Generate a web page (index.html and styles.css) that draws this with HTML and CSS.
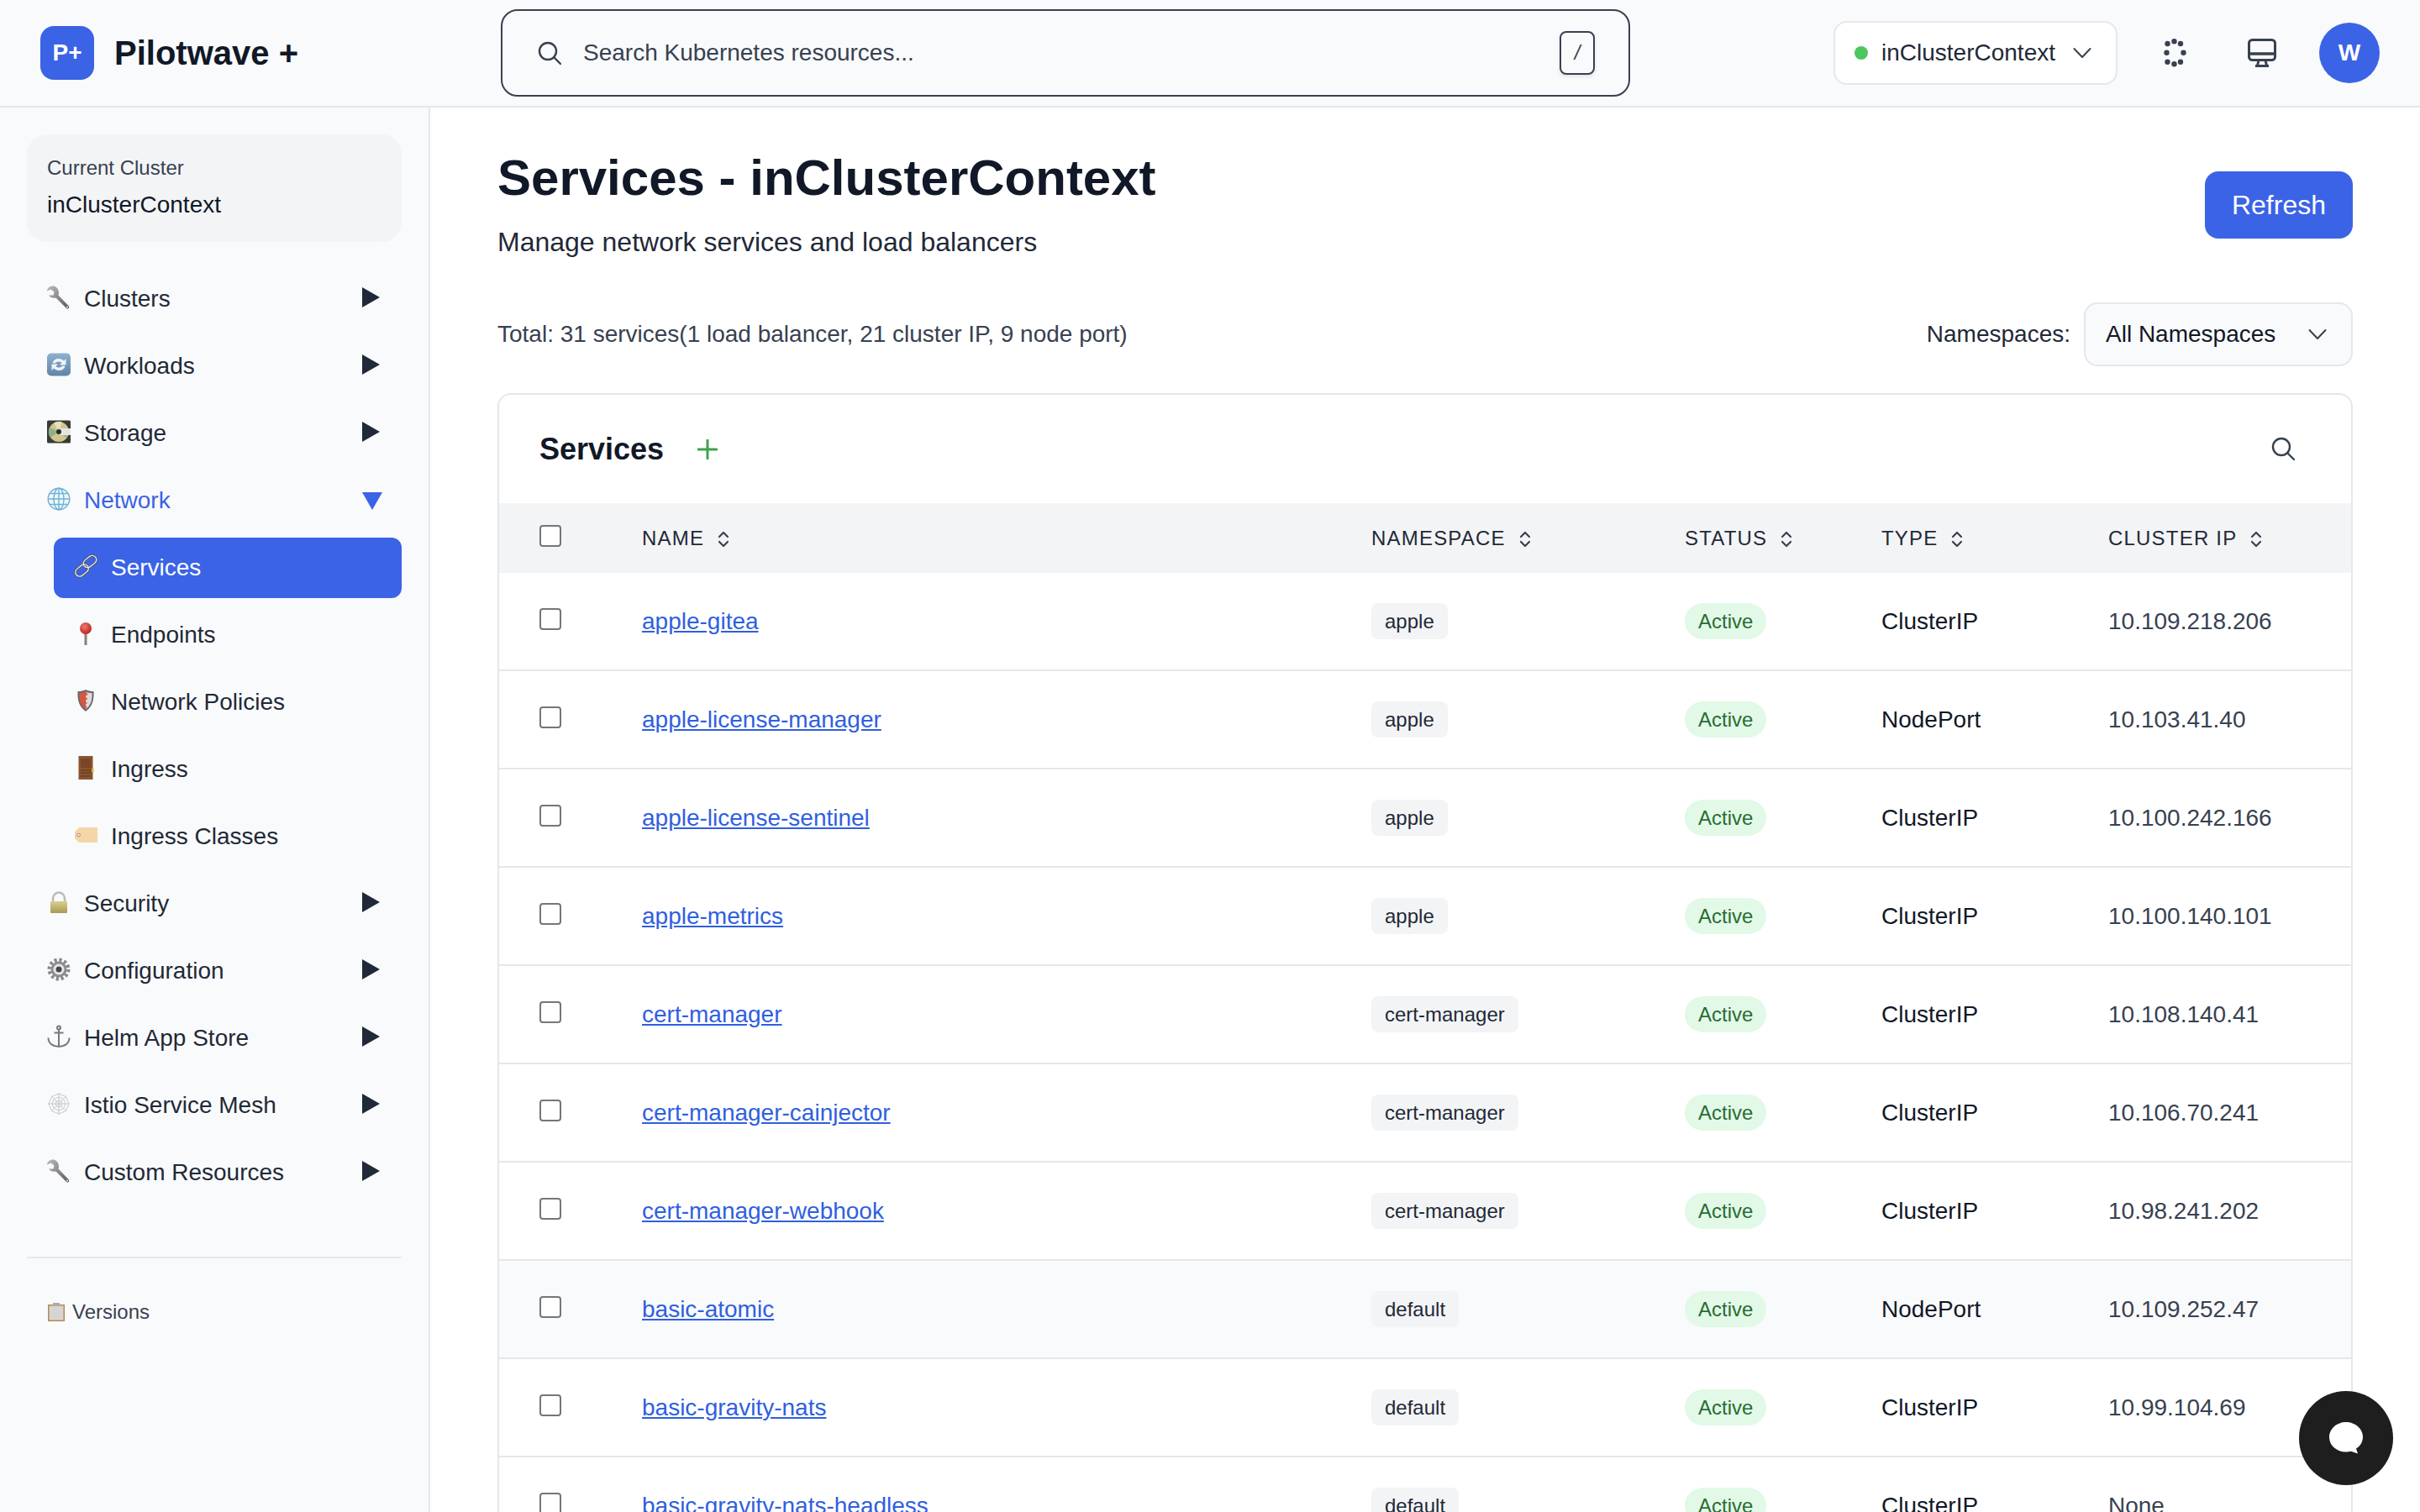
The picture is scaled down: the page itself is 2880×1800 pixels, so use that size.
FILE: index.html
```html
<!DOCTYPE html>
<html lang="en">
<head>
    <meta charset="UTF-8">
    <title>Services - Pilotwave +</title>
    <link rel="stylesheet" href="styles.css">
</head>
<body>

    <!-- Shared icons -->
    <svg class="icon-defs" width="0" height="0">
        <defs>
            <linearGradient id="steel" x1="0" y1="0" x2="1" y2="1">
                <stop offset="0" stop-color="#b9b9bb"/>
                <stop offset="1" stop-color="#5f5a5a"/>
            </linearGradient>
            <linearGradient id="brass" x1="0" y1="0" x2="0" y2="1">
                <stop offset="0" stop-color="#d9cf8e"/>
                <stop offset="1" stop-color="#a89a55"/>
            </linearGradient>
            <linearGradient id="tile" x1="0" y1="0" x2="0" y2="1">
                <stop offset="0" stop-color="#8fb0cf"/>
                <stop offset="1" stop-color="#5f84a8"/>
            </linearGradient>
            <radialGradient id="pinhead" cx="0.4" cy="0.35" r="0.7">
                <stop offset="0" stop-color="#ee7a70"/>
                <stop offset="1" stop-color="#b81f1c"/>
            </radialGradient>
        </defs>
        <symbol id="wrench" viewBox="0 0 28 28">
            <path d="M8 0.500C3.500 0 .5 2.500 0 6.500l4.500-2L8.500 7.500 7.500 11.500 2 11.500c1.500 2.500 5 4 8.500 3L23 27c1.500 1.500 4-.5 3-2.500L13.500 11.500C15 6.500 12.500 1.500 8 0.500z" fill="url(#steel)"/>
            <circle cx="24" cy="25.500" r="1" fill="#eee"/>
        </symbol>
        <symbol id="arrows" viewBox="0 0 28 28">
            <rect width="28" height="27" y=".5" rx="5" fill="url(#tile)"/>
            <path d="M6.500 12c1-3.500 4-5 7.500-5 2.500 0 4.500 1 6 2.500L22.500 7v7.500H15l2.500-2.500c-1-1-2.200-1.500-3.500-1.500-2 0-3.500.7-4.200 2z" fill="#eef3f8"/>
            <path d="M21.500 16c-1 3.500-4 5-7.500 5-2.500 0-4.500-1-6-2.500L5.500 21v-7.500H13l-2.500 2.500c1 1 2.200 1.500 3.500 1.500 2 0 3.500-.7 4.200-2z" fill="#eef3f8"/>
        </symbol>
        <symbol id="disc" viewBox="0 0 28 28">
            <rect width="28" height="27" y=".5" rx="1.500" fill="#3b3936"/>
            <circle cx="14" cy="14" r="12" fill="#cfc68f"/>
            <path d="M14 14 3 9a12 12 0 0 0 1 12zM14 14l9 7a12 12 0 0 0 2-5z" fill="#8fb08a"/>
            <path d="M14 14 8 3.500a12 12 0 0 1 10-1z" fill="#e6dfc0"/>
            <rect x="15" y="10" width="13" height="8" fill="#e4e4e2"/>
            <circle cx="14" cy="14" r="3" fill="#2c2a28"/>
        </symbol>
        <symbol id="globe" viewBox="0 0 28 28">
            <g fill="#eef6fa" stroke="#6fb2d6" stroke-width="1.400">
                <circle cx="14" cy="14" r="12.800"/>
                <ellipse cx="14" cy="14" rx="6" ry="12.800"/>
            </g>
            <path d="M14 1.200v25.600M1.200 14h25.600M3 7.500h22M3 20.500h22" stroke="#6fb2d6" stroke-width="1.400" fill="none"/>
        </symbol>
        <symbol id="link" viewBox="0 0 28 28">
            <g fill="none" stroke="#4b4b4f" stroke-width="2.800">
                <rect x="-8.500" y="-5" width="17" height="10" rx="5" transform="translate(19 8.500) rotate(-38)"/>
                <rect x="-8.500" y="-5" width="17" height="10" rx="5" transform="translate(9.500 19) rotate(-38)"/>
            </g>
            <g fill="none" stroke="#e4e4e6" stroke-width="1.400">
                <rect x="-8.500" y="-5" width="17" height="10" rx="5" transform="translate(19 8.500) rotate(-38)"/>
                <rect x="-8.500" y="-5" width="17" height="10" rx="5" transform="translate(9.500 19) rotate(-38)"/>
            </g>
        </symbol>
        <symbol id="pin" viewBox="0 0 28 28">
            <rect x="12.500" y="10" width="3" height="18" fill="#8a8078"/>
            <circle cx="14" cy="8" r="7" fill="url(#pinhead)"/>
        </symbol>
        <symbol id="shield" viewBox="0 0 28 28">
            <path d="M14 1c3 1.500 6 2 9.500 2 .5 9-1 18-9.500 24C5.500 21 4 12 4.500 3 8 3 11 2.500 14 1z" fill="#6d6a6c"/>
            <path d="M14 3.500c2.500 1 5 1.600 7.500 1.600.3 7.500-1 14.500-7.500 19.500z" fill="#dcdcdc"/>
            <path d="M14 3.500c-2.500 1-5 1.600-7.500 1.600-.3 7.500 1 14.500 7.500 19.500l1.500-3-3-2.500 3.500-2-3.500-3 4-2-3.500-3 3.500-2-2-3.500z" fill="#d9573f"/>
        </symbol>
        <symbol id="door" viewBox="0 0 28 28">
            <rect x="5.500" width="17" height="28" fill="#8a5430"/>
            <rect x="8" y="3" width="12" height="11" fill="#7a4527"/>
            <path d="M8 17h12M8 20h12M8 24h12" stroke="#5f3419" stroke-width="1.200"/>
            <rect x="21" y="15" width="2.500" height="4" fill="#d9b23c"/>
        </symbol>
        <symbol id="tag" viewBox="0 0 28 28">
            <path d="M6 5h22v18H6L1 18v-8z" fill="#f4d6a8"/>
            <circle cx="5.500" cy="14" r="1.800" fill="#fff" stroke="#9a8468"/>
        </symbol>
        <symbol id="lock" viewBox="0 0 28 28">
            <path d="M7 14V9.500a7 7 0 0 1 14 0V14" fill="none" stroke="#b8bcc2" stroke-width="2.600"/>
            <rect x="4" y="13" width="20" height="14" rx="1" fill="url(#brass)"/>
        </symbol>
        <symbol id="gear" viewBox="0 0 28 28">
            <circle cx="14" cy="14" r="10.500" fill="none" stroke="#8a8a8c" stroke-width="6" stroke-dasharray="3 2.500"/>
            <circle cx="14" cy="14" r="9.500" fill="#8e8e91"/>
            <circle cx="14" cy="14" r="6.500" fill="#e8e8ea"/>
            <circle cx="14" cy="14" r="3.500" fill="#45454a"/>
        </symbol>
        <symbol id="anchor" viewBox="0 0 28 28">
            <g fill="none" stroke="#77797d" stroke-width="2">
                <circle cx="14" cy="3.500" r="2"/>
                <path d="M14 5.500V26M8.500 9.500h11M1.500 15.500c0 7 6 10.500 12.500 10.500s12.500-3.500 12.500-10.500"/>
            </g>
        </symbol>
        <symbol id="web" viewBox="0 0 28 28">
            <g fill="none" stroke="#c6c8cc" stroke-width="1">
                <path d="M14 1v26M1 14h26M4.800 4.800l18.400 18.400M23.200 4.800 4.800 23.200"/>
                <path d="M14 2 22.500 5.500 26 14 22.500 22.500 14 26 5.500 22.500 2 14 5.500 5.500z"/>
                <path d="M14 6 19.700 8.300 22 14 19.700 19.700 14 22 8.300 19.700 6 14 8.300 8.300z"/>
                <path d="M14 10 16.800 11.200 18 14 16.800 16.800 14 18 11.200 16.800 10 14 11.200 11.200z"/>
            </g>
        </symbol>
        <symbol id="clipboard" viewBox="0 0 22 22">
            <rect x="1" y="2" width="20" height="20" fill="#b58a52"/>
            <rect x="2.500" y="3.500" width="17" height="17" fill="#d5d5d3"/>
            <rect x="7" y="0" width="8" height="3.500" fill="#a9a9a7"/>
        </symbol>
        <symbol id="sort" viewBox="0 0 14 20">
            <path d="M2 7l5-5 5 5M2 13l5 5 5-5" fill="none" stroke="currentColor" stroke-width="2.200" stroke-linecap="round" stroke-linejoin="round"/>
        </symbol>
        <symbol id="search" viewBox="0 0 28 28">
            <circle cx="12" cy="12" r="10" fill="none" stroke="currentColor" stroke-width="2.400"/>
            <path d="M19.500 19.500 27 27" fill="none" stroke="currentColor" stroke-width="2.400" stroke-linecap="round"/>
        </symbol>
        <symbol id="chevron" viewBox="0 0 22 14">
            <path d="M1.500 2 11 12 20.500 2" fill="none" stroke="currentColor" stroke-width="2" stroke-linecap="round" stroke-linejoin="round"/>
        </symbol>
    </svg>

    <!-- Top bar -->
    <header class="topbar">
        <div class="brand">
            <span class="brand-mark">P+</span>
            <span class="brand-name">Pilotwave +</span>
        </div>
        <div class="global-search">
            <svg class="search-icon"><use href="#search"/></svg>
            <span class="search-hint">Search Kubernetes resources...</span>
            <kbd class="search-key">/</kbd>
        </div>
        <div class="topbar-right">
            <div class="context-select">
                <span class="status-dot"></span>
                <span>inClusterContext</span>
                <svg class="chevron"><use href="#chevron"/></svg>
            </div>
            <div class="topbar-button">
                <svg width="28" height="34" viewBox="0 0 28 34" fill="#374151">
                    <circle cx="13.500" cy="3.300" r="3.200"/><circle cx="5.500" cy="6" r="3.200"/><circle cx="21" cy="6" r="3.200"/>
                    <circle cx="4.500" cy="16.700" r="3.200"/><circle cx="24.500" cy="16.700" r="3.200"/>
                    <circle cx="5.500" cy="27.700" r="3.200"/><circle cx="13.500" cy="30.300" r="3.200"/><circle cx="21" cy="27.700" r="3.200"/>
                </svg>
            </div>
            <div class="topbar-button">
                <svg width="34" height="34" viewBox="0 0 34 34" fill="none" stroke="#374151" stroke-width="3">
                    <rect x="1.500" y="1.500" width="31" height="24" rx="4"/>
                    <path d="M1.500 18h31" stroke-width="3.500"/>
                    <path d="M13 26l-1.500 6M21 26l1.500 6M9 32.500h16"/>
                </svg>
            </div>
            <div class="avatar">W</div>
        </div>
    </header>

    <div class="layout">
        <!-- Sidebar -->
        <aside class="sidebar">
            <div class="cluster-card">
                <div class="cluster-label">Current Cluster</div>
                <div class="cluster-name">inClusterContext</div>
            </div>

            <nav class="nav">
                <div class="nav-item"><svg class="nav-icon"><use href="#wrench"/></svg><span>Clusters</span><span class="arrow"></span></div>
                <div class="nav-item"><svg class="nav-icon"><use href="#arrows"/></svg><span>Workloads</span><span class="arrow"></span></div>
                <div class="nav-item"><svg class="nav-icon"><use href="#disc"/></svg><span>Storage</span><span class="arrow"></span></div>
                <div class="nav-item open"><svg class="nav-icon"><use href="#globe"/></svg><span>Network</span><span class="arrow"></span></div>
                <div class="nav-item sub active"><svg class="nav-icon"><use href="#link"/></svg><span>Services</span></div>
                <div class="nav-item sub"><svg class="nav-icon"><use href="#pin"/></svg><span>Endpoints</span></div>
                <div class="nav-item sub"><svg class="nav-icon"><use href="#shield"/></svg><span>Network Policies</span></div>
                <div class="nav-item sub"><svg class="nav-icon"><use href="#door"/></svg><span>Ingress</span></div>
                <div class="nav-item sub"><svg class="nav-icon"><use href="#tag"/></svg><span>Ingress Classes</span></div>
                <div class="nav-item"><svg class="nav-icon"><use href="#lock"/></svg><span>Security</span><span class="arrow"></span></div>
                <div class="nav-item"><svg class="nav-icon"><use href="#gear"/></svg><span>Configuration</span><span class="arrow"></span></div>
                <div class="nav-item"><svg class="nav-icon"><use href="#anchor"/></svg><span>Helm App Store</span><span class="arrow"></span></div>
                <div class="nav-item"><svg class="nav-icon"><use href="#web"/></svg><span>Istio Service Mesh</span><span class="arrow"></span></div>
                <div class="nav-item"><svg class="nav-icon"><use href="#wrench"/></svg><span>Custom Resources</span><span class="arrow"></span></div>
            </nav>

            <div class="sidebar-footer">
                <svg class="versions-icon"><use href="#clipboard"/></svg>
                <span>Versions</span>
            </div>
        </aside>

        <!-- Main content -->
        <main class="main">
            <div class="page-head">
                <div>
                    <h1>Services - inClusterContext</h1>
                    <p class="page-sub">Manage network services and load balancers</p>
                </div>
                <button class="refresh-button">Refresh</button>
            </div>

            <div class="summary-row">
                <div class="summary">Total: 31 services(1 load balancer, 21 cluster IP, 9 node port)</div>
                <div class="namespace-filter">
                    <span>Namespaces:</span>
                    <div class="namespace-select">
                        <span>All Namespaces</span>
                        <svg class="chevron"><use href="#chevron"/></svg>
                    </div>
                </div>
            </div>

            <section class="card">
                <div class="card-head">
                    <h2>Services</h2>
                    <svg class="add-icon" width="24" height="24" viewBox="0 0 24 24"><path d="M12 1v22M1 12h22" stroke="#3fa34d" stroke-width="3" stroke-linecap="round"/></svg>
                    <svg class="card-search"><use href="#search"/></svg>
                </div>

                <table class="services">
                    <colgroup>
                        <col class="col-check"><col class="col-name"><col class="col-ns">
                        <col class="col-status"><col class="col-type"><col class="col-ip">
                    </colgroup>
                    <thead>
                        <tr>
                            <th><input type="checkbox"></th>
                            <th>Name<svg class="sort"><use href="#sort"/></svg></th>
                            <th>Namespace<svg class="sort"><use href="#sort"/></svg></th>
                            <th>Status<svg class="sort"><use href="#sort"/></svg></th>
                            <th>Type<svg class="sort"><use href="#sort"/></svg></th>
                            <th>Cluster IP<svg class="sort"><use href="#sort"/></svg></th>
                        </tr>
                    </thead>
                    <tbody>
                        <tr>
                            <td><input type="checkbox"></td>
                            <td><a href="#">apple-gitea</a></td>
                            <td><span class="ns-badge">apple</span></td>
                            <td><span class="status-badge">Active</span></td>
                            <td class="type">ClusterIP</td>
                            <td>10.109.218.206</td>
                        </tr>
                        <tr>
                            <td><input type="checkbox"></td>
                            <td><a href="#">apple-license-manager</a></td>
                            <td><span class="ns-badge">apple</span></td>
                            <td><span class="status-badge">Active</span></td>
                            <td class="type">NodePort</td>
                            <td>10.103.41.40</td>
                        </tr>
                        <tr>
                            <td><input type="checkbox"></td>
                            <td><a href="#">apple-license-sentinel</a></td>
                            <td><span class="ns-badge">apple</span></td>
                            <td><span class="status-badge">Active</span></td>
                            <td class="type">ClusterIP</td>
                            <td>10.100.242.166</td>
                        </tr>
                        <tr>
                            <td><input type="checkbox"></td>
                            <td><a href="#">apple-metrics</a></td>
                            <td><span class="ns-badge">apple</span></td>
                            <td><span class="status-badge">Active</span></td>
                            <td class="type">ClusterIP</td>
                            <td>10.100.140.101</td>
                        </tr>
                        <tr>
                            <td><input type="checkbox"></td>
                            <td><a href="#">cert-manager</a></td>
                            <td><span class="ns-badge">cert-manager</span></td>
                            <td><span class="status-badge">Active</span></td>
                            <td class="type">ClusterIP</td>
                            <td>10.108.140.41</td>
                        </tr>
                        <tr>
                            <td><input type="checkbox"></td>
                            <td><a href="#">cert-manager-cainjector</a></td>
                            <td><span class="ns-badge">cert-manager</span></td>
                            <td><span class="status-badge">Active</span></td>
                            <td class="type">ClusterIP</td>
                            <td>10.106.70.241</td>
                        </tr>
                        <tr>
                            <td><input type="checkbox"></td>
                            <td><a href="#">cert-manager-webhook</a></td>
                            <td><span class="ns-badge">cert-manager</span></td>
                            <td><span class="status-badge">Active</span></td>
                            <td class="type">ClusterIP</td>
                            <td>10.98.241.202</td>
                        </tr>
                        <tr class="hovered">
                            <td><input type="checkbox"></td>
                            <td><a href="#">basic-atomic</a></td>
                            <td><span class="ns-badge">default</span></td>
                            <td><span class="status-badge">Active</span></td>
                            <td class="type">NodePort</td>
                            <td>10.109.252.47</td>
                        </tr>
                        <tr>
                            <td><input type="checkbox"></td>
                            <td><a href="#">basic-gravity-nats</a></td>
                            <td><span class="ns-badge">default</span></td>
                            <td><span class="status-badge">Active</span></td>
                            <td class="type">ClusterIP</td>
                            <td>10.99.104.69</td>
                        </tr>
                        <tr>
                            <td><input type="checkbox"></td>
                            <td><a href="#">basic-gravity-nats-headless</a></td>
                            <td><span class="ns-badge">default</span></td>
                            <td><span class="status-badge">Active</span></td>
                            <td class="type">ClusterIP</td>
                            <td>None</td>
                        </tr>
                    </tbody>
                </table>
            </section>
        </main>
    </div>

    <!-- Chat button -->
    <div class="chat-button">
        <svg width="40" height="38" viewBox="0 0 40 38"><path d="M20 0C9 0 0 8 0 18s9 17.500 20 17.500c2 0 4-.2 6-.7l8 2.700-2-6c5-3 8-8 8-14C40 8 31 0 20 0z" fill="#fff"/></svg>
    </div>

</body>
</html>
```

FILE: styles.css
```css
/* Basic Reset */
* {
    margin: 0;
    padding: 0;
    box-sizing: border-box;
}

body {
    font-family: 'Liberation Sans', Arial, sans-serif;
    font-size: 28px;
    color: #111827;
    background-color: #FFFFFF;
    height: 1800px;
    overflow: hidden;
}

.icon-defs {
    position: absolute;
}

/* Top bar */
.topbar {
    height: 128px;
    display: flex;
    align-items: center;
    padding: 0 48px;
    background-color: #F9FAFB;
    border-bottom: 2px solid #E5E7EB;
}

.brand {
    width: 548px;
    display: flex;
    align-items: center;
    gap: 24px;
}

.brand-mark {
    width: 64px;
    height: 64px;
    display: flex;
    align-items: center;
    justify-content: center;
    background-color: #3B63E5;
    border-radius: 16px;
    color: white;
    font-size: 28px;
    font-weight: bold;
}

.brand-name {
    font-size: 40px;
    font-weight: bold;
}

.global-search {
    width: 1344px;
    height: 104px;
    display: flex;
    align-items: center;
    padding: 0 40px 0 42px;
    border: 2px solid #374151;
    border-radius: 20px;
    color: #374151;
}

.search-icon {
    width: 28px;
    height: 28px;
    margin-right: 26px;
}

.search-hint {
    flex: 1;
}

.search-key {
    width: 42px;
    height: 52px;
    display: flex;
    align-items: center;
    justify-content: center;
    border: 2px solid #374151;
    border-radius: 8px;
    font-family: 'Liberation Sans', Arial, sans-serif;
    font-size: 24px;
    font-style: italic;
    box-shadow: 0 2px 4px rgba(0, 0, 0, 0.1);
}

.topbar-right {
    margin-left: auto;
    display: flex;
    align-items: center;
    gap: 32px;
}

.context-select {
    width: 338px;
    height: 76px;
    display: flex;
    align-items: center;
    padding-left: 23px;
    background-color: white;
    border: 2px solid #E5E7EB;
    border-radius: 16px;
    color: #1F2937;
}

.status-dot {
    width: 16px;
    height: 16px;
    margin-right: 16px;
    background-color: #4CC65F;
    border-radius: 50%;
}

.chevron {
    width: 22px;
    height: 14px;
    color: #374151;
}

.context-select .chevron {
    margin-left: 21px;
}

.topbar-button {
    width: 72px;
    height: 72px;
    display: flex;
    align-items: center;
    justify-content: center;
}

.avatar {
    width: 72px;
    height: 72px;
    display: flex;
    align-items: center;
    justify-content: center;
    background-color: #3B63E5;
    border-radius: 50%;
    color: white;
    font-weight: bold;
}

/* Layout */
.layout {
    display: flex;
    height: 1672px;
}

/* Sidebar */
.sidebar {
    width: 512px;
    flex-shrink: 0;
    padding: 32px 32px 0;
    background-color: #F9FAFB;
    border-right: 2px solid #E5E7EB;
}

.cluster-card {
    height: 128px;
    padding: 24px;
    background-color: #F3F4F6;
    border-radius: 24px;
}

.cluster-label {
    font-size: 24px;
    line-height: 32px;
    color: #374151;
}

.cluster-name {
    margin-top: 8px;
    line-height: 40px;
}

.nav {
    margin-top: 32px;
    display: flex;
    flex-direction: column;
    gap: 8px;
}

.nav-item {
    height: 72px;
    display: flex;
    align-items: center;
    gap: 16px;
    padding: 0 26px 0 24px;
    border-radius: 12px;
    color: #1F2937;
}

.nav-item.open {
    color: #3B63E5;
}

.nav-item.sub {
    margin-left: 32px;
}

.nav-item.active {
    background-color: #3B63E5;
    color: white;
}

.nav-icon {
    width: 28px;
    height: 28px;
    flex-shrink: 0;
    margin-top: -4px;
}

.arrow {
    margin-left: auto;
    margin-bottom: 4px;
    border-left: 21px solid #1F2937;
    border-top: 12px solid transparent;
    border-bottom: 12px solid transparent;
}

.nav-item.open .arrow {
    border-left: 12px solid transparent;
    border-right: 12px solid transparent;
    border-top: 21px solid #3B63E5;
    border-bottom: 0;
    margin-right: -3px;
    margin-bottom: 0;
}

.sidebar-footer {
    margin-top: 64px;
    padding: 48px 24px 0;
    border-top: 2px solid #E5E7EB;
    display: flex;
    align-items: center;
    gap: 8px;
    font-size: 24px;
    line-height: 32px;
    color: #374151;
}

.versions-icon {
    width: 22px;
    height: 22px;
}

/* Main content */
.main {
    flex: 1;
    padding: 48px 80px 0;
    overflow: hidden;
}

.page-head {
    display: flex;
    justify-content: space-between;
    align-items: center;
}

h1 {
    font-size: 60px;
    line-height: 72px;
}

.page-sub {
    margin-top: 16px;
    font-size: 32px;
    line-height: 48px;
    color: #1F2937;
}

.refresh-button {
    height: 80px;
    padding: 0 32px;
    background-color: #3B63E5;
    border: none;
    border-radius: 16px;
    color: white;
    font-family: inherit;
    font-size: 32px;
}

.summary-row {
    margin-top: 48px;
    display: flex;
    justify-content: space-between;
    align-items: center;
}

.summary {
    color: #374151;
}

.namespace-filter {
    display: flex;
    align-items: center;
    gap: 16px;
    color: #1F2937;
}

.namespace-select {
    width: 320px;
    height: 76px;
    display: flex;
    align-items: center;
    padding-left: 24px;
    background-color: #F9FAFB;
    border: 2px solid #E5E7EB;
    border-radius: 16px;
    color: #111827;
}

.namespace-select .chevron {
    margin-left: auto;
    margin-right: 29px;
}

/* Services card */
.card {
    margin-top: 32px;
    background-color: white;
    border: 2px solid #E5E7EB;
    border-radius: 16px;
    overflow: hidden;
}

.card-head {
    height: 129px;
    display: flex;
    align-items: center;
    padding: 0 48px;
}

h2 {
    font-size: 36px;
    line-height: 44px;
}

.add-icon {
    margin-left: 40px;
}

.card-search {
    width: 28px;
    height: 28px;
    margin-left: auto;
    margin-right: 19px;
    margin-bottom: 2px;
    color: #374151;
}

/* Table */
.services {
    width: 100%;
    table-layout: fixed;
    border-collapse: separate;
    border-spacing: 0;
}

.col-check { width: 122px; }
.col-name { width: 868px; }
.col-ns { width: 373px; }
.col-status { width: 234px; }
.col-type { width: 270px; }

th {
    height: 83px;
    padding: 0 0 0 48px;
    background-color: #F3F4F6;
    text-align: left;
    font-size: 24px;
    font-weight: normal;
    text-transform: uppercase;
    letter-spacing: 0.05em;
    color: #1F2937;
}

td {
    height: 117px;
    padding: 0 0 0 48px;
    border-bottom: 2px solid #E5E7EB;
    color: #374151;
}

tr.hovered td {
    background-color: #F9FAFB;
}

td.type {
    color: #111827;
}

input[type="checkbox"] {
    appearance: none;
    display: block;
    width: 26px;
    height: 26px;
    margin-bottom: 6px;
    background-color: white;
    border: 2px solid #767676;
    border-radius: 4px;
}

.sort {
    width: 14px;
    height: 20px;
    margin-left: 16px;
    vertical-align: -3px;
    color: #374151;
}

a {
    color: #2F5FE0;
}

.ns-badge,
.status-badge {
    display: inline-block;
    height: 43px;
    padding: 0 16px;
    font-size: 24px;
    line-height: 43px;
    vertical-align: middle;
}

.ns-badge {
    background-color: #F3F4F6;
    border-radius: 8px;
    color: #1F2937;
}

.status-badge {
    background-color: #E1F9E6;
    border-radius: 22px;
    color: #2A6B35;
}

/* Chat button */
.chat-button {
    position: fixed;
    right: 32px;
    bottom: 32px;
    width: 112px;
    height: 112px;
    display: flex;
    align-items: center;
    justify-content: center;
    background-color: #1E1E1E;
    border-radius: 50%;
}
```
